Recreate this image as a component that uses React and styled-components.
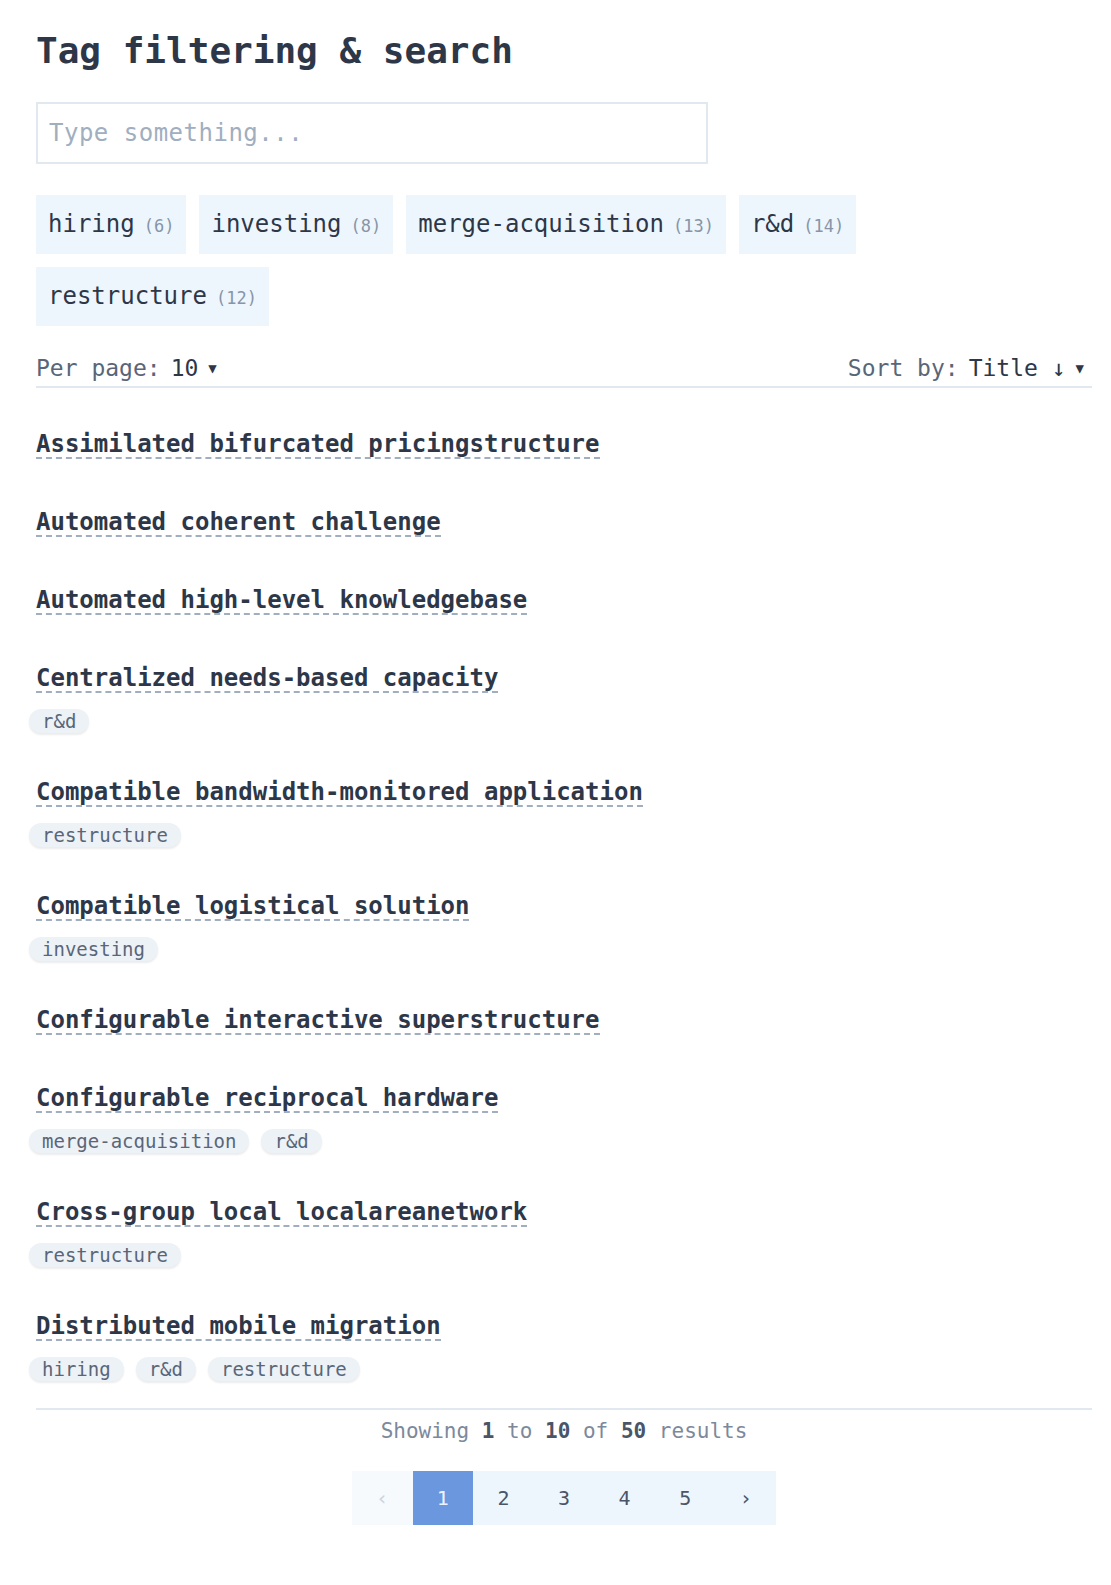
import React, { useState } from 'react';
import styled, { createGlobalStyle } from 'styled-components';

const GlobalStyle = createGlobalStyle`
  body {
    margin: 0;
    background: #fff;
    font-family: "DejaVu Sans Mono", "Liberation Mono", monospace;
    color: #2d3748;
  }
`;

const Page = styled.div`
  padding: 29px 19px 40px 36px;
`;

const Title = styled.h1`
  margin: 0 0 30px;
  font-size: 36px;
  line-height: 43px;
  font-weight: 700;
  color: #2d3748;
`;

const SearchInput = styled.input`
  box-sizing: border-box;
  display: block;
  width: 672px;
  height: 62px;
  padding: 0 11px;
  border: 2px solid #e2e8f0;
  font-family: inherit;
  font-size: 24px;
  letter-spacing: 0.5px;
  color: #2d3748;
  outline: none;
  &::placeholder {
    color: #a0aec0;
  }
`;

const FilterTags = styled.div`
  display: flex;
  flex-wrap: wrap;
  gap: 13px;
  margin-top: 31px;
`;

const FilterTag = styled.button`
  display: flex;
  align-items: baseline;
  height: 59px;
  padding: 0 12px;
  border: none;
  background: ${p => (p.$active ? '#bee3f8' : '#eef6fd')};
  font-family: inherit;
  font-size: 24px;
  line-height: 59px;
  color: #2d3748;
  cursor: pointer;
`;

const Count = styled.span`
  margin-left: 9px;
  font-size: 17px;
  color: #8795a8;
`;

const Toolbar = styled.div`
  display: flex;
  justify-content: space-between;
  align-items: center;
  margin-top: 24px;
  padding: 0 8px 0 0;
  height: 36px;
  border-bottom: 2px solid #e2e8f0;
  font-size: 23px;
`;

const Control = styled.div`
  display: flex;
  align-items: center;
`;

const Label = styled.span`
  color: #5a6678;
  margin-right: 10px;
`;

const Value = styled.span`
  color: #2d3748;
`;

const Caret = styled.span`
  font-size: 14px;
  margin-left: 10px;
  color: #2d3748;
`;

const List = styled.div`
  padding-top: 42px;
`;

const Item = styled.div`
  margin-bottom: 49px;
  &:last-child {
    margin-bottom: 31px;
  }
`;

const ItemTitle = styled.a`
  display: inline-block;
  padding-top: 1px;
  font-size: 24px;
  line-height: 26px;
  font-weight: 700;
  color: #2d3748;
  text-decoration: none;
  border-bottom: 2px dashed #a0aec0;
  cursor: pointer;
`;

const Chips = styled.div`
  display: flex;
  gap: 12px;
  margin: 16px 0 -4px -7px;
`;

const Chip = styled.span`
  height: 24px;
  padding: 0 13px;
  border-radius: 12px;
  background: #edf2f7;
  box-shadow: 0 2px 2px rgba(0, 0, 0, 0.08);
  font-size: 19px;
  line-height: 24px;
  color: #5a6678;
`;

const Footer = styled.div`
  border-top: 2px solid #e2e8f0;
  padding-top: 6px;
  display: flex;
  flex-direction: column;
  align-items: center;
`;

const Summary = styled.div`
  font-size: 21px;
  line-height: 30px;
  color: #7d899b;
  b {
    color: #4a5568;
  }
`;

const Pagination = styled.div`
  display: flex;
  margin-top: 25px;
`;

const PageButton = styled.button`
  width: 60.6px;
  height: 53.5px;
  border: none;
  padding: 0;
  font-family: inherit;
  font-size: 20px;
  cursor: pointer;
  background: ${p => (p.$active ? '#6b97de' : p.$disabled ? '#f7fafc' : '#eef6fd')};
  color: ${p => (p.$active ? '#ebf4ff' : p.$disabled ? '#cbd5e0' : '#4a5568')};
`;

const tags = [
  ['hiring', 6],
  ['investing', 8],
  ['merge-acquisition', 13],
  ['r&d', 14],
  ['restructure', 12],
];

const items = [
  ['Assimilated bifurcated pricingstructure', []],
  ['Automated coherent challenge', []],
  ['Automated high-level knowledgebase', []],
  ['Centralized needs-based capacity', ['r&d']],
  ['Compatible bandwidth-monitored application', ['restructure']],
  ['Compatible logistical solution', ['investing']],
  ['Configurable interactive superstructure', []],
  ['Configurable reciprocal hardware', ['merge-acquisition', 'r&d']],
  ['Cross-group local localareanetwork', ['restructure']],
  ['Distributed mobile migration', ['hiring', 'r&d', 'restructure']],
];

export default function App() {
  const [query, setQuery] = useState('');
  const [page, setPage] = useState(1);

  return (
    <Page>
      <GlobalStyle />
      <Title>Tag filtering &amp; search</Title>
      <SearchInput
        value={query}
        onChange={e => setQuery(e.target.value)}
        placeholder="Type something..."
      />
      <FilterTags>
        {tags.map(([name, count]) => (
          <FilterTag key={name}>
            {name}
            <Count>({count})</Count>
          </FilterTag>
        ))}
      </FilterTags>
      <Toolbar>
        <Control>
          <Label>Per page:</Label>
          <Value>10</Value>
          <Caret>▼</Caret>
        </Control>
        <Control>
          <Label>Sort by:</Label>
          <Value>Title ↓</Value>
          <Caret>▼</Caret>
        </Control>
      </Toolbar>
      <List>
        {items.map(([title, itemTags]) => (
          <Item key={title}>
            <ItemTitle>{title}</ItemTitle>
            {itemTags.length > 0 && (
              <Chips>
                {itemTags.map(t => <Chip key={t}>{t}</Chip>)}
              </Chips>
            )}
          </Item>
        ))}
      </List>
      <Footer>
        <Summary>
          Showing <b>1</b> to <b>10</b> of <b>50</b> results
        </Summary>
        <Pagination>
          <PageButton $disabled>‹</PageButton>
          {[1, 2, 3, 4, 5].map(n => (
            <PageButton key={n} $active={n === page} onClick={() => setPage(n)}>
              {n}
            </PageButton>
          ))}
          <PageButton>›</PageButton>
        </Pagination>
      </Footer>
    </Page>
  );
}
